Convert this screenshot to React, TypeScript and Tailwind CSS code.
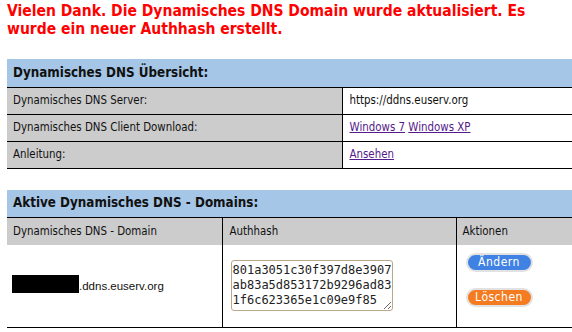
import React from 'react'

const font = "font-['DejaVu_Sans_Condensed','DejaVu_Sans',sans-serif]"

function Pill({ label, color }: { label: string; color: string }) {
  return (
    <button
      className={`w-[67px] h-[19px] rounded-full border-2 border-[#e2e2e2] text-white text-[12px] leading-none tracking-[0.5px] ${color}`}
    >
      {label}
    </button>
  )
}

const hash = '801a3051c30f397d8e3907\nab83a5d853172b9296ad83\n1f6c623365e1c09e9f85'

export default function App() {
  return (
    <div className={`h-[332px] w-[572px] overflow-hidden bg-white text-[#111] ${font}`}>
      <div className="pl-[7px] pt-[2px]">
        <h1 className="text-[15.5px] leading-[18px] font-bold text-[#ff0000]">
          Vielen Dank. Die Dynamisches DNS Domain wurde aktualisiert. Es
          <br />
          wurde ein neuer Authhash erstellt.
        </h1>

        {/* Übersicht */}
        <table className="mt-[21px] w-[565px] border-collapse text-[11.4px]">
          <colgroup>
            <col className="w-[335px]" />
            <col />
          </colgroup>
          <thead>
            <tr className="bg-[#a5c6e6] border-b border-black">
              <th colSpan={2} className="h-[28px] pl-[6px] text-left text-[13.3px] font-bold">
                Dynamisches DNS Übersicht:
              </th>
            </tr>
          </thead>
          <tbody>
            <tr className="border-b border-black">
              <td className="h-[27px] pl-[6px] bg-[#cccccc] border-r border-black">Dynamisches DNS Server:</td>
              <td className="pl-[7px]">https://ddns.euserv.org</td>
            </tr>
            <tr className="border-b border-black">
              <td className="h-[27px] pl-[6px] bg-[#cccccc] border-r border-black">Dynamisches DNS Client Download:</td>
              <td className="pl-[7px]">
                <a href="#" className="text-[#551a8b] underline">Windows 7</a>{' '}
                <a href="#" className="text-[#551a8b] underline">Windows XP</a>
              </td>
            </tr>
            <tr className="border-b border-black">
              <td className="h-[27px] pl-[6px] bg-[#cccccc] border-r border-black">Anleitung:</td>
              <td className="pl-[7px]">
                <a href="#" className="text-[#551a8b] underline">Ansehen</a>
              </td>
            </tr>
          </tbody>
        </table>

        {/* Domains */}
        <table className="mt-[21px] w-[565px] border-collapse text-[11.4px]">
          <colgroup>
            <col className="w-[215px]" />
            <col className="w-[234px]" />
            <col />
          </colgroup>
          <thead>
            <tr className="bg-[#a5c6e6] border-b border-black">
              <th colSpan={3} className="h-[28px] pl-[6px] text-left text-[13.3px] font-bold">
                Aktive Dynamisches DNS - Domains:
              </th>
            </tr>
            <tr className="bg-[#cccccc]">
              <th className="h-[27px] pl-[6px] text-left font-normal border-r border-black">Dynamisches DNS - Domain</th>
              <th className="pl-[7px] text-left font-normal border-r border-black">Authhash</th>
              <th className="pl-[6px] text-left font-normal">Aktionen</th>
            </tr>
          </thead>
          <tbody>
            <tr className="border-b border-black">
              <td className="h-[83px] pl-[5px] border-r border-black">
                <span className="inline-flex items-end pt-[2px] font-['Liberation_Sans',sans-serif] text-[11.5px]">
                  <span className="inline-block w-[67px] h-[18px] bg-black" />
                  <span className="leading-[13px]">.ddns.euserv.org</span>
                </span>
              </td>
              <td className="pl-[8px] border-r border-black">
                <textarea
                  readOnly
                  rows={3}
                  wrap="off"
                  className="block w-[162px] h-[51px] resize rounded-[3px] border border-[#b9a98a] px-[1px] pt-[2px] font-['DejaVu_Sans_Mono',monospace] text-[12px] leading-[15px] text-[#222] overflow-hidden whitespace-pre"
                  defaultValue={hash}
                />
              </td>
              <td className="pl-[9px] pb-[12px]">
                <div className="flex flex-col gap-[16px]">
                  <Pill label="Ändern" color="bg-[#3f82e4]" />
                  <Pill label="Löschen" color="bg-[#f47b20]" />
                </div>
              </td>
            </tr>
          </tbody>
        </table>
      </div>
    </div>
  )
}
